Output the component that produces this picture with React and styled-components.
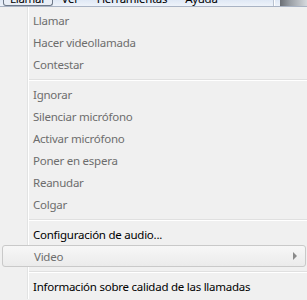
import React from "react";
import styled, { createGlobalStyle } from "styled-components";

const GlobalStyle = createGlobalStyle`
  html, body { margin: 0; padding: 0; background: #f0f0f0; }
  body { font-family: "Noto Sans", "DejaVu Sans", sans-serif; }
`;

const Page = styled.div`
  width: 307px;
  height: 300px;
  overflow: hidden;
  background: #f0f0f0;
`;

const MenuBar = styled.div`
  height: 7px;
  display: flex;
  overflow: hidden;
  background: linear-gradient(to bottom, #dfe8f5, #eef3fa);
  border-bottom: 1px solid #a9b3c4;
  box-sizing: border-box;
`;

const BarItems = styled.div`
  flex: 1;
  display: flex;
  align-items: flex-end;
  padding-left: 3px;
  border-right: 1px solid #ffffff;
  box-shadow: inset -1px 0 0 #b9c2d0;
`;

const BarItem = styled.div`
  height: 13px;
  padding: 0 ${(p) => (p.$active ? "6px" : "8px")};
  font-size: 11.5px;
  letter-spacing: -0.3px;
  line-height: 11px;
  color: #000;
  box-sizing: border-box;
  border: ${(p) => (p.$active ? "1px solid #6f7a8a" : "1px solid transparent")};
  border-top: none;
  border-radius: 0 0 3px 3px;
  background: ${(p) => (p.$active ? "#e9eef6" : "transparent")};
  white-space: nowrap;
`;

const DarkPanel = styled.div`
  width: 27px;
  margin-left: 5px;
  background: linear-gradient(to right, #6a6e74, #9da2a8 40%, #d6d9dd);
`;

const Menu = styled.div`
  padding: 2px 0 2px;
  background: linear-gradient(
    to right,
    #f0f0f0 0,
    #f0f0f0 27px,
    #e2e3e3 27px,
    #e2e3e3 28px,
    #ffffff 28px,
    #ffffff 29px,
    #f0f0f0 29px
  );
`;

const Item = styled.div`
  position: relative;
  height: 22px;
  display: flex;
  align-items: center;
  padding-left: ${(p) => (p.$hover ? "31px" : "33px")};
  margin: ${(p) => (p.$hover ? "0 1px 0 2px" : "0")};
  font-size: 11.5px;
  letter-spacing: -0.25px;
  color: ${(p) => (p.$disabled ? "#6d6d6d" : "#000000")};
  white-space: nowrap;
  box-sizing: border-box;
  border: ${(p) => (p.$hover ? "1px solid #c9c9c9" : "none")};
  border-radius: 3px;
  background: ${(p) =>
    p.$hover ? "linear-gradient(to bottom, #f7f7f7, #ebebeb)" : "transparent"};
`;

const Separator = styled.div`
  height: 8px;
  display: flex;
  align-items: center;
  margin-left: 29px;
  &::after {
    content: "";
    display: block;
    width: 100%;
    height: 1px;
    background: #e0e0e0;
    box-shadow: 0 1px 0 #ffffff;
  }
`;

const Arrow = styled.span`
  position: absolute;
  right: 8px;
  top: 50%;
  margin-top: -4px;
  width: 0;
  height: 0;
  border-top: 4px solid transparent;
  border-bottom: 4px solid transparent;
  border-left: 4px solid #8a8a8a;
`;

const groups = [
  [
    { label: "Llamar", disabled: true },
    { label: "Hacer videollamada", disabled: true },
    { label: "Contestar", disabled: true },
  ],
  [
    { label: "Ignorar", disabled: true },
    { label: "Silenciar micrófono", disabled: true },
    { label: "Activar micrófono", disabled: true },
    { label: "Poner en espera", disabled: true },
    { label: "Reanudar", disabled: true },
    { label: "Colgar", disabled: true },
  ],
  [
    { label: "Configuración de audio..." },
    { label: "Video", disabled: true, hover: true, sub: true },
  ],
  [{ label: "Información sobre calidad de las llamadas" }],
];

export default function App() {
  return (
    <Page>
      <GlobalStyle />
      <MenuBar>
        <BarItems>
          <BarItem $active>Llamar</BarItem>
          <BarItem>Ver</BarItem>
          <BarItem>Herramientas</BarItem>
          <BarItem>Ayuda</BarItem>
        </BarItems>
        <DarkPanel />
      </MenuBar>
      <Menu>
        {groups.map((g, gi) => (
          <React.Fragment key={gi}>
            {gi > 0 && <Separator />}
            {g.map((it) => (
              <Item key={it.label} $disabled={it.disabled} $hover={it.hover}>
                {it.label}
                {it.sub && <Arrow />}
              </Item>
            ))}
          </React.Fragment>
        ))}
      </Menu>
    </Page>
  );
}
